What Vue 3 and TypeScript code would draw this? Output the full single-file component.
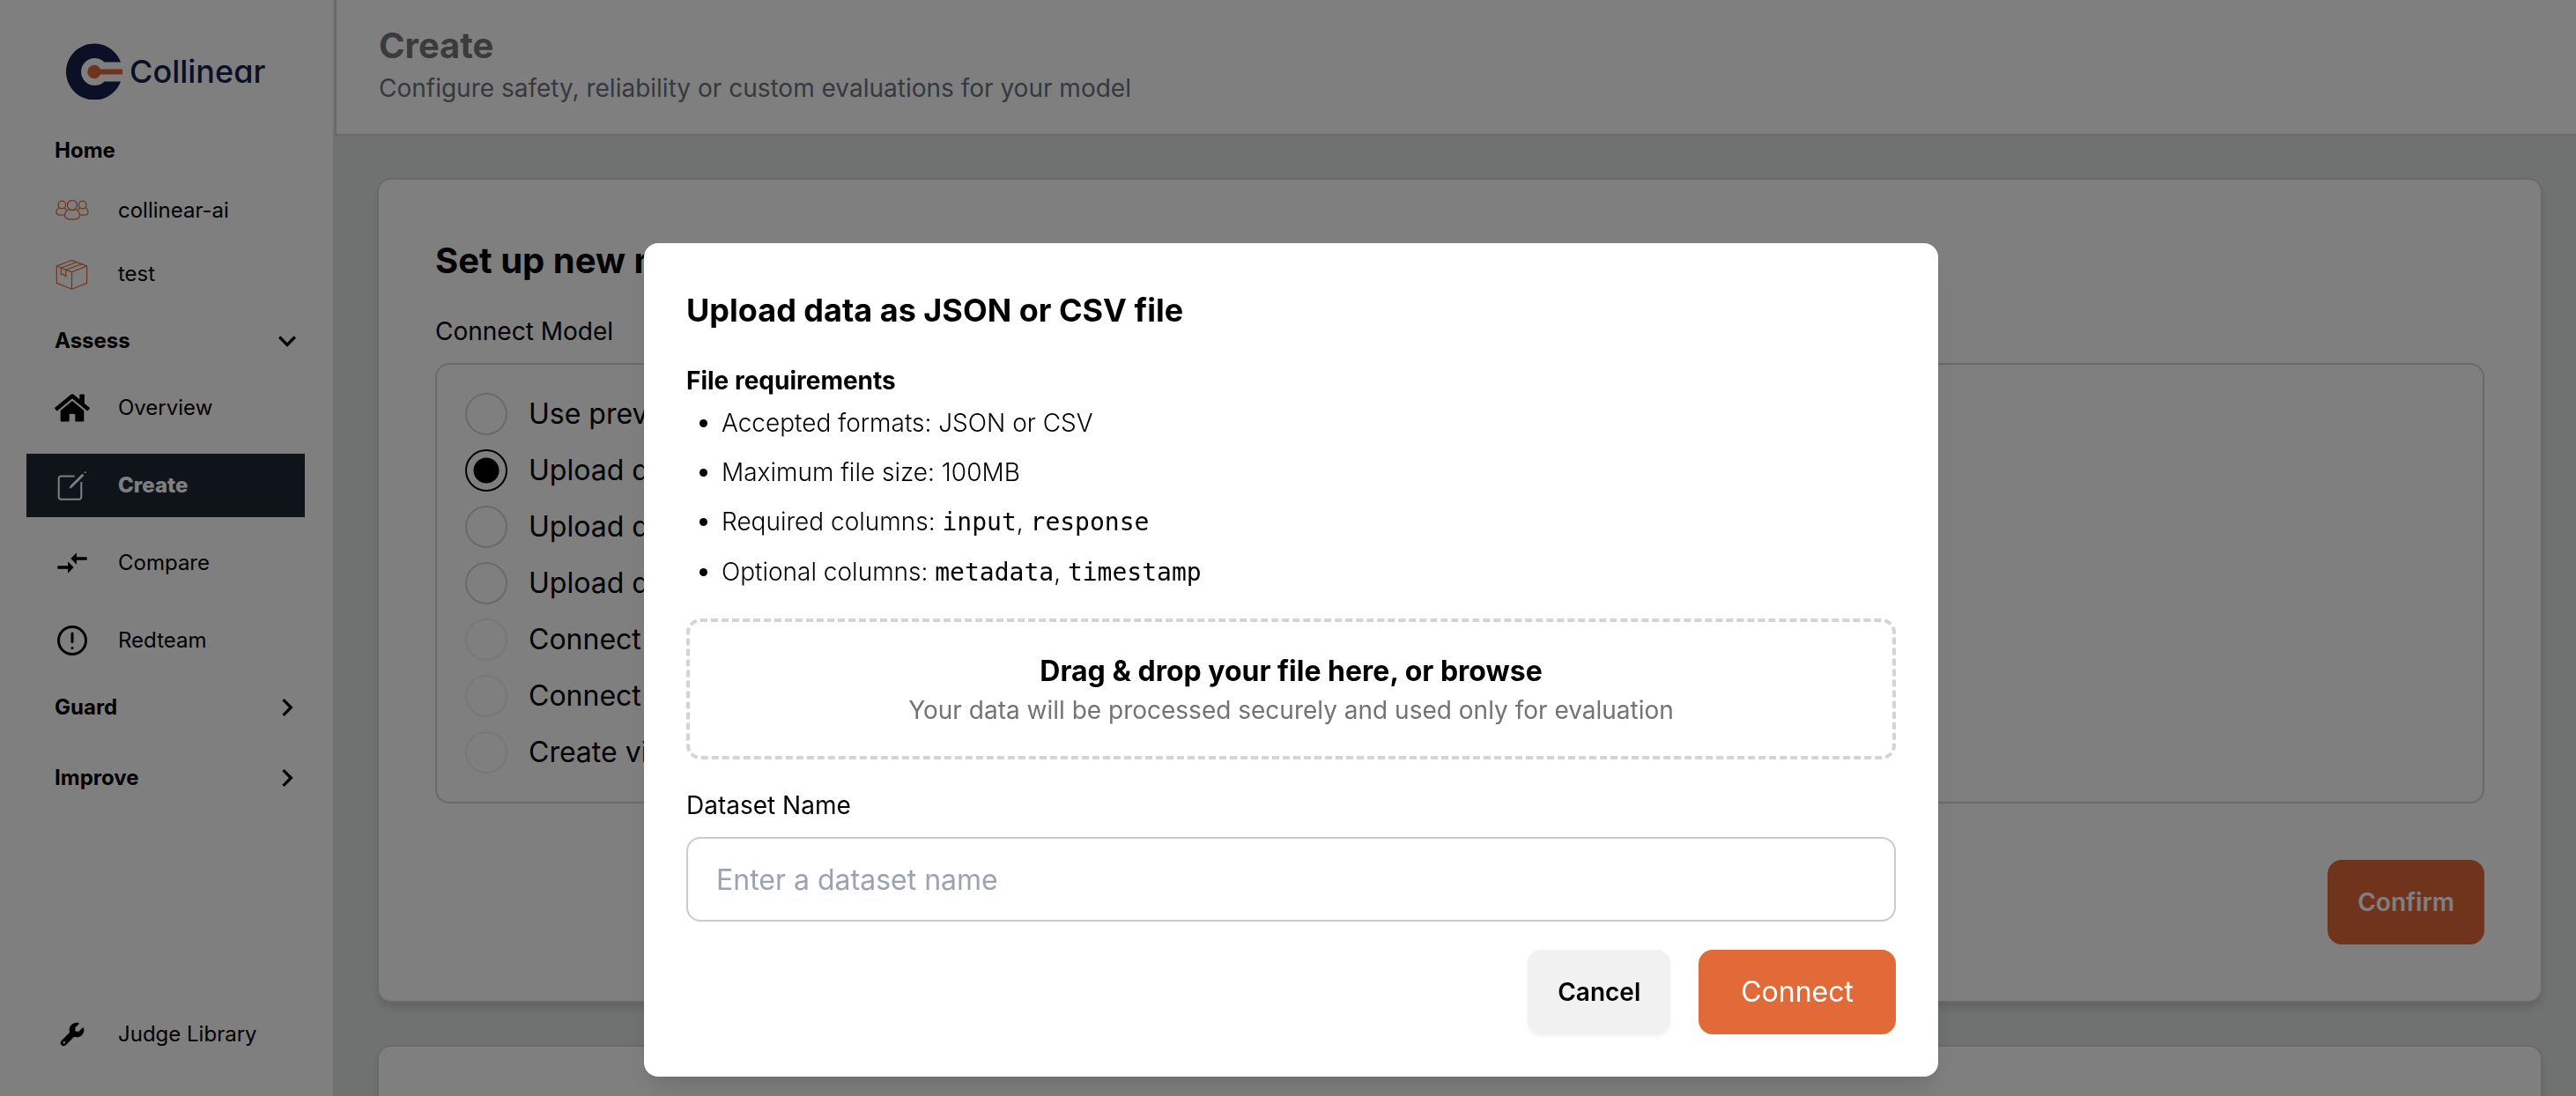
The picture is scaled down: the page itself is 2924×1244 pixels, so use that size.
<script setup lang="ts">
import { ref } from 'vue'

interface ModelSource {
  id: string
  label: string
  disabled?: boolean
}

const sources: ModelSource[] = [
  { id: 'previous', label: 'Use previous' },
  { id: 'upload-file', label: 'Upload data' },
  { id: 'upload-hub', label: 'Upload data' },
  { id: 'upload-storage', label: 'Upload data' },
  { id: 'connect-api', label: 'Connect API', disabled: true },
  { id: 'connect-app', label: 'Connect app', disabled: true },
  { id: 'create', label: 'Create via', disabled: true },
]

const selected = ref('upload-file')
const datasetName = ref('')
</script>

<template>
  <div class="app">
    <aside class="sidebar">
      <a class="logo" href="#">
        <svg width="64" height="64" viewBox="0 0 64 64" aria-hidden="true">
          <path fill="#16204f" d="M62 21.500A32 32 0 1 0 62 43.500H43.500A15.500 15.500 0 1 1 43.500 21.500Z" />
          <circle cx="32" cy="32.500" r="7.700" fill="#e1683a" />
          <path fill="#e1683a" d="M32 29.500H64V35.500H32Z" />
        </svg>
        <span>Collinear</span>
      </a>

      <nav class="nav">
        <div class="home">Home</div>
        <a class="item" href="#">
          <svg class="icon line" viewBox="0 0 40 40" aria-hidden="true">
            <ellipse cx="20" cy="14" rx="5.500" ry="5.700" />
            <path d="M16.500 18.800C13 20 11.500 22.500 11.500 25.500 11.500 29 15 30.200 20 30.200S28.500 29 28.500 25.500C28.500 22.500 27 20 23.500 18.800" />
            <circle cx="8.300" cy="13.500" r="4.300" />
            <circle cx="31.700" cy="13.500" r="4.300" />
            <path d="M5.500 16.800C3 18 2 20 2 22.200 2 24.500 4.500 25.200 7.500 25.200 9 25.200 10.500 25 11.500 24.500M10.800 16.800 14 19.500" />
            <path d="M34.500 16.800C37 18 38 20 38 22.200 38 24.500 35.500 25.200 32.500 25.200 31 25.200 29.500 25 28.500 24.500M29.200 16.800 26 19.500" />
          </svg>
          collinear-ai
        </a>
        <a class="item" href="#">
          <svg class="icon line" viewBox="0 0 40 40" aria-hidden="true">
            <path d="M19.400 4.500 2.300 11V30.300L19.500 37.200 36.600 30.300V11ZM2.300 11 19.500 17.800 36.600 11M19.500 17.800V37.200" />
            <path d="M7.300 13 25.300 6.500M13 15.200 31.300 8.500M7.300 13V20.500L9.800 20.300 12.700 22.700V15.200" />
          </svg>
          test
        </a>
        <button class="section" type="button">
          Assess
          <svg class="icon" viewBox="0 0 24 24" aria-hidden="true"><path d="M16.590 8.590 12 13.170 7.410 8.590 6 10l6 6 6-6z" /></svg>
        </button>
        <div class="group">
          <a class="item" href="#">
            <svg class="icon" viewBox="0 0 576 512" aria-hidden="true">
              <path d="M280.370 148.260L96 300.110V464a16 16 0 0 0 16 16l112.060-.290a16 16 0 0 0 15.920-16V368a16 16 0 0 1 16-16h64a16 16 0 0 1 16 16v95.640a16 16 0 0 0 16 16.050L464 480a16 16 0 0 0 16-16V300L295.670 148.260a12.190 12.190 0 0 0-15.300 0zM571.600 251.470L488 182.560V44.050a12 12 0 0 0-12-12h-56a12 12 0 0 0-12 12v72.610L318.470 43a48 48 0 0 0-61 0L4.340 251.470a12 12 0 0 0-1.600 16.900l25.500 31A12 12 0 0 0 45.150 301l235.220-193.740a12.190 12.190 0 0 1 15.300 0L530.900 301a12 12 0 0 0 16.900-1.600l25.500-31a12 12 0 0 0-1.700-16.930z" />
            </svg>
            Overview
          </a>
          <a class="item active" href="#" aria-current="page">
            <svg class="icon pen" viewBox="0 0 40 40" aria-hidden="true">
              <path d="M22.700 9.500H7.500A2.500 2.500 0 0 0 4.700 12V33A2.500 2.500 0 0 0 7.500 35.700H27.500A2.500 2.500 0 0 0 30.300 33V16" />
              <path class="solid" d="M16.500 23.700 17.800 20.300 31.300 6.800 33.300 8.800 19.800 22.300ZM33.500 5.300 35 4 36 5.200 34.700 6.500Z" />
            </svg>
            Create
          </a>
          <a class="item" href="#">
            <svg class="icon" viewBox="0 0 24 24" aria-hidden="true"><path d="M9.010 14H2v2h7.010v3L13 15l-3.990-4v3zm5.980-1v-3H22V8h-7.010V5L11 9l3.990 4z" /></svg>
            Compare
          </a>
          <a class="item" href="#">
            <svg class="icon alert" viewBox="0 0 40 40" aria-hidden="true">
              <circle cx="20" cy="20" r="15.500" />
              <path d="M20 12V21.500" />
              <path d="M20 28.500V28.600" />
            </svg>
            Redteam
          </a>
        </div>
        <button v-for="name in ['Guard', 'Improve']" :key="name" class="section" type="button">
          {{ name }}
          <svg class="icon" viewBox="0 0 24 24" aria-hidden="true"><path d="M10 6 8.590 7.410 13.170 12l-4.580 4.590L10 18l6-6z" /></svg>
        </button>
      </nav>

      <a class="item library" href="#">
        <svg class="icon" viewBox="-128 -128 768 768" aria-hidden="true">
          <path d="M352 320c88.400 0 160-71.600 160-160c0-15.300-2.200-30.100-6.200-44.200c-3.100-10.800-16.400-13.200-24.300-5.300l-76.800 76.800c-3 3-7.100 4.700-11.300 4.700L336 192c-8.800 0-16-7.200-16-16l0-57.400c0-4.200 1.700-8.300 4.700-11.300l76.800-76.800c7.900-7.900 5.400-21.200-5.300-24.300C382.100 2.200 367.300 0 352 0C263.600 0 192 71.600 192 160c0 19.100 3.400 37.500 9.500 54.500L19.900 396.100C7.200 408.800 0 426.100 0 444.100C0 481.600 30.400 512 67.900 512c18 0 35.300-7.200 48-19.900L297.500 310.500c17 6.200 35.400 9.500 54.500 9.500zM80 408a24 24 0 1 1 0 48 24 24 0 1 1 0-48z" />
        </svg>
        Judge Library
      </a>
    </aside>

    <main class="main">
      <header class="header">
        <h1>Create</h1>
        <p>Configure safety, reliability or custom evaluations for your model</p>
      </header>
      <div class="content">
        <section class="card">
          <h2>Set up new model</h2>
          <p id="connect-label" class="field-label">Connect Model</p>
          <div class="options" role="radiogroup" aria-labelledby="connect-label">
            <label v-for="source in sources" :key="source.id" class="option">
              <input v-model="selected" type="radio" name="source" :value="source.id" :disabled="source.disabled" />
              {{ source.label }}
            </label>
          </div>
          <button class="btn confirm" type="button">Confirm</button>
        </section>
        <section class="card next"></section>
      </div>
    </main>

    <div class="overlay">
      <div class="modal" role="dialog" aria-modal="true" aria-labelledby="modal-title">
        <h2 id="modal-title">Upload data as JSON or CSV file</h2>
        <h3>File requirements</h3>
        <ul class="rules">
          <li>Accepted formats: JSON or CSV</li>
          <li>Maximum file size: 100MB</li>
          <li>Required columns: <code>input</code>, <code>response</code></li>
          <li>Optional columns: <code>metadata</code>, <code>timestamp</code></li>
        </ul>
        <button class="dropzone" type="button">
          <strong>Drag &amp; drop your file here, or browse</strong>
          <span>Your data will be processed securely and used only for evaluation</span>
        </button>
        <label class="field-label" for="dataset-name">Dataset Name</label>
        <input id="dataset-name" v-model="datasetName" class="text-input" type="text" placeholder="Enter a dataset name" />
        <div class="actions">
          <button class="btn cancel" type="button">Cancel</button>
          <button class="btn connect" type="button">Connect</button>
        </div>
      </div>
    </div>
  </div>
</template>

<style>
body {
  margin: 0;
}
</style>

<style scoped>
* {
  box-sizing: border-box;
}

.app {
  display: flex;
  height: 100vh;
  overflow: hidden;
  background: #e1e5e2;
  color: #000;
  font-family: Inter, 'Liberation Sans', sans-serif;
  font-size: 28px;
  line-height: 40px;
}

h1,
h2,
h3,
p,
ul {
  margin: 0;
  padding: 0;
}

button {
  border: 0;
  background: none;
  color: inherit;
  font: inherit;
  cursor: pointer;
}

a {
  color: inherit;
  text-decoration: none;
}

.sidebar {
  display: flex;
  flex: 0 0 378px;
  flex-direction: column;
  padding: 49px 32px 34px 30px;
  background: #fff;
  font-size: 24px;
  line-height: 32px;
}

.logo {
  display: flex;
  align-items: center;
  gap: 8px;
  margin-bottom: 26px;
  padding-left: 45px;
  color: #16204f;
  font-feature-settings: 'cv11';
  font-size: 36px;
  font-weight: 500;
}

.nav {
  display: flex;
  flex-direction: column;
}

.home {
  padding: 16px 32px;
  font-weight: 700;
}

.item {
  display: flex;
  align-items: center;
  gap: 32px;
  height: 72px;
  padding-left: 32px;
}

.icon {
  flex: none;
  width: 40px;
  height: 40px;
  fill: currentColor;
}

.line {
  fill: none;
  stroke: #e1683a;
  stroke-width: 1.2;
}

.pen {
  fill: none;
  stroke: currentColor;
  stroke-width: 2;
}

.solid {
  fill: currentColor;
  stroke: none;
}

.alert {
  fill: none;
  stroke: currentColor;
  stroke-width: 3;
  stroke-linecap: round;
}

.section {
  display: flex;
  align-items: center;
  justify-content: space-between;
  height: 80px;
  padding: 0 0 0 32px;
  font-weight: 700;
}

.group {
  display: flex;
  flex-direction: column;
  gap: 16px;
}

.active {
  background: #1f2937;
  color: #fff;
  font-weight: 800;
}

.library {
  margin-top: auto;
}

.main {
  display: flex;
  flex: 1;
  flex-direction: column;
  min-width: 0;
}

.header {
  margin-left: 2px;
  padding: 24px 48px 32px;
  border-bottom: 2px solid #d4d4d4;
  border-left: 2px solid #d4d4d4;
  background: #fff;
}

.header h1 {
  color: #767676;
  font-size: 40px;
  font-weight: 700;
  line-height: 56px;
}

.header p {
  color: #6b7280;
}

.content {
  display: flex;
  flex: 1;
  flex-direction: column;
  gap: 48px;
  min-height: 0;
  padding: 48px 38px 0 50px;
}

.card {
  display: flex;
  flex: none;
  flex-direction: column;
  padding: 64px;
  border: 2px solid #d4d4d4;
  border-radius: 16px;
  background: #fff;
  box-shadow: 0 8px 12px -2px rgba(0, 0, 0, 0.1), 0 4px 8px -2px rgba(0, 0, 0, 0.06);
}

.next {
  min-height: 400px;
}

.card h2 {
  margin-bottom: 32px;
  font-size: 40px;
  font-weight: 700;
  line-height: 56px;
}

.field-label {
  display: block;
  margin-bottom: 16px;
}

.options {
  display: flex;
  flex-direction: column;
  gap: 16px;
  padding: 32px;
  border: 2px solid #d4d4d4;
  border-radius: 16px;
}

.option {
  display: flex;
  align-items: center;
  gap: 24px;
  font-size: 32px;
  line-height: 48px;
}

.option input {
  width: 48px;
  height: 48px;
  margin: 0;
  border: 2px solid #d4d4d4;
  border-radius: 50%;
  appearance: none;
}

.option input:checked {
  border-color: #000;
  background: radial-gradient(circle, #000 14px, transparent 15px);
}

.option input:disabled {
  opacity: 0.4;
}

.btn {
  height: 96px;
  padding: 0 34px;
  border-radius: 16px;
  font-weight: 600;
}

.confirm {
  align-self: flex-end;
  margin-top: 64px;
  background: #e1683a;
  color: #fff;
}

.overlay {
  position: fixed;
  inset: 0;
  padding-top: 276px;
  overflow: hidden;
  background: rgba(0, 0, 0, 0.5);
}

.modal {
  width: calc(50% + 7px);
  margin-left: 25%;
  padding: 48px;
  border-radius: 16px;
  background: #fff;
  box-shadow: 0 20px 30px -6px rgba(0, 0, 0, 0.1), 0 8px 12px -4px rgba(0, 0, 0, 0.05);
}

.modal h2 {
  margin-bottom: 32px;
  font-size: 36px;
  font-weight: 700;
  line-height: 56px;
}

.modal h3 {
  margin-bottom: 8px;
  font-size: 28px;
  font-weight: 700;
}

.rules {
  display: flex;
  flex-direction: column;
  gap: 16px;
  margin-bottom: 32px;
  padding-left: 40px;
  font-weight: 300;
}

.rules code {
  font-family: 'DejaVu Sans Mono', monospace;
  font-size: 28px;
  font-weight: 400;
}

.dropzone {
  display: flex;
  flex-direction: column;
  align-items: center;
  width: 100%;
  margin-bottom: 32px;
  padding: 32px;
  border: 4px dashed #d4d4d4;
  border-radius: 16px;
}

.dropzone strong {
  font-size: 32px;
  font-weight: 700;
  line-height: 48px;
}

.dropzone span {
  color: #737373;
}

.text-input {
  width: 100%;
  height: 96px;
  padding: 0 32px;
  border: 2px solid #cbcbcb;
  border-radius: 16px;
  background: #fff;
  color: #000;
  font: inherit;
  font-size: 32px;
}

.text-input::placeholder {
  color: #9ca3af;
  opacity: 1;
}

.actions {
  display: flex;
  justify-content: flex-end;
  gap: 32px;
  margin-top: 32px;
}

.cancel {
  background: #f1f1f1;
  box-shadow: 0 2px 4px rgba(0, 0, 0, 0.06);
}

.connect {
  padding: 0 48px;
  background: #e16a38;
  color: #fff;
  font-size: 32px;
  font-weight: 400;
}
</style>
